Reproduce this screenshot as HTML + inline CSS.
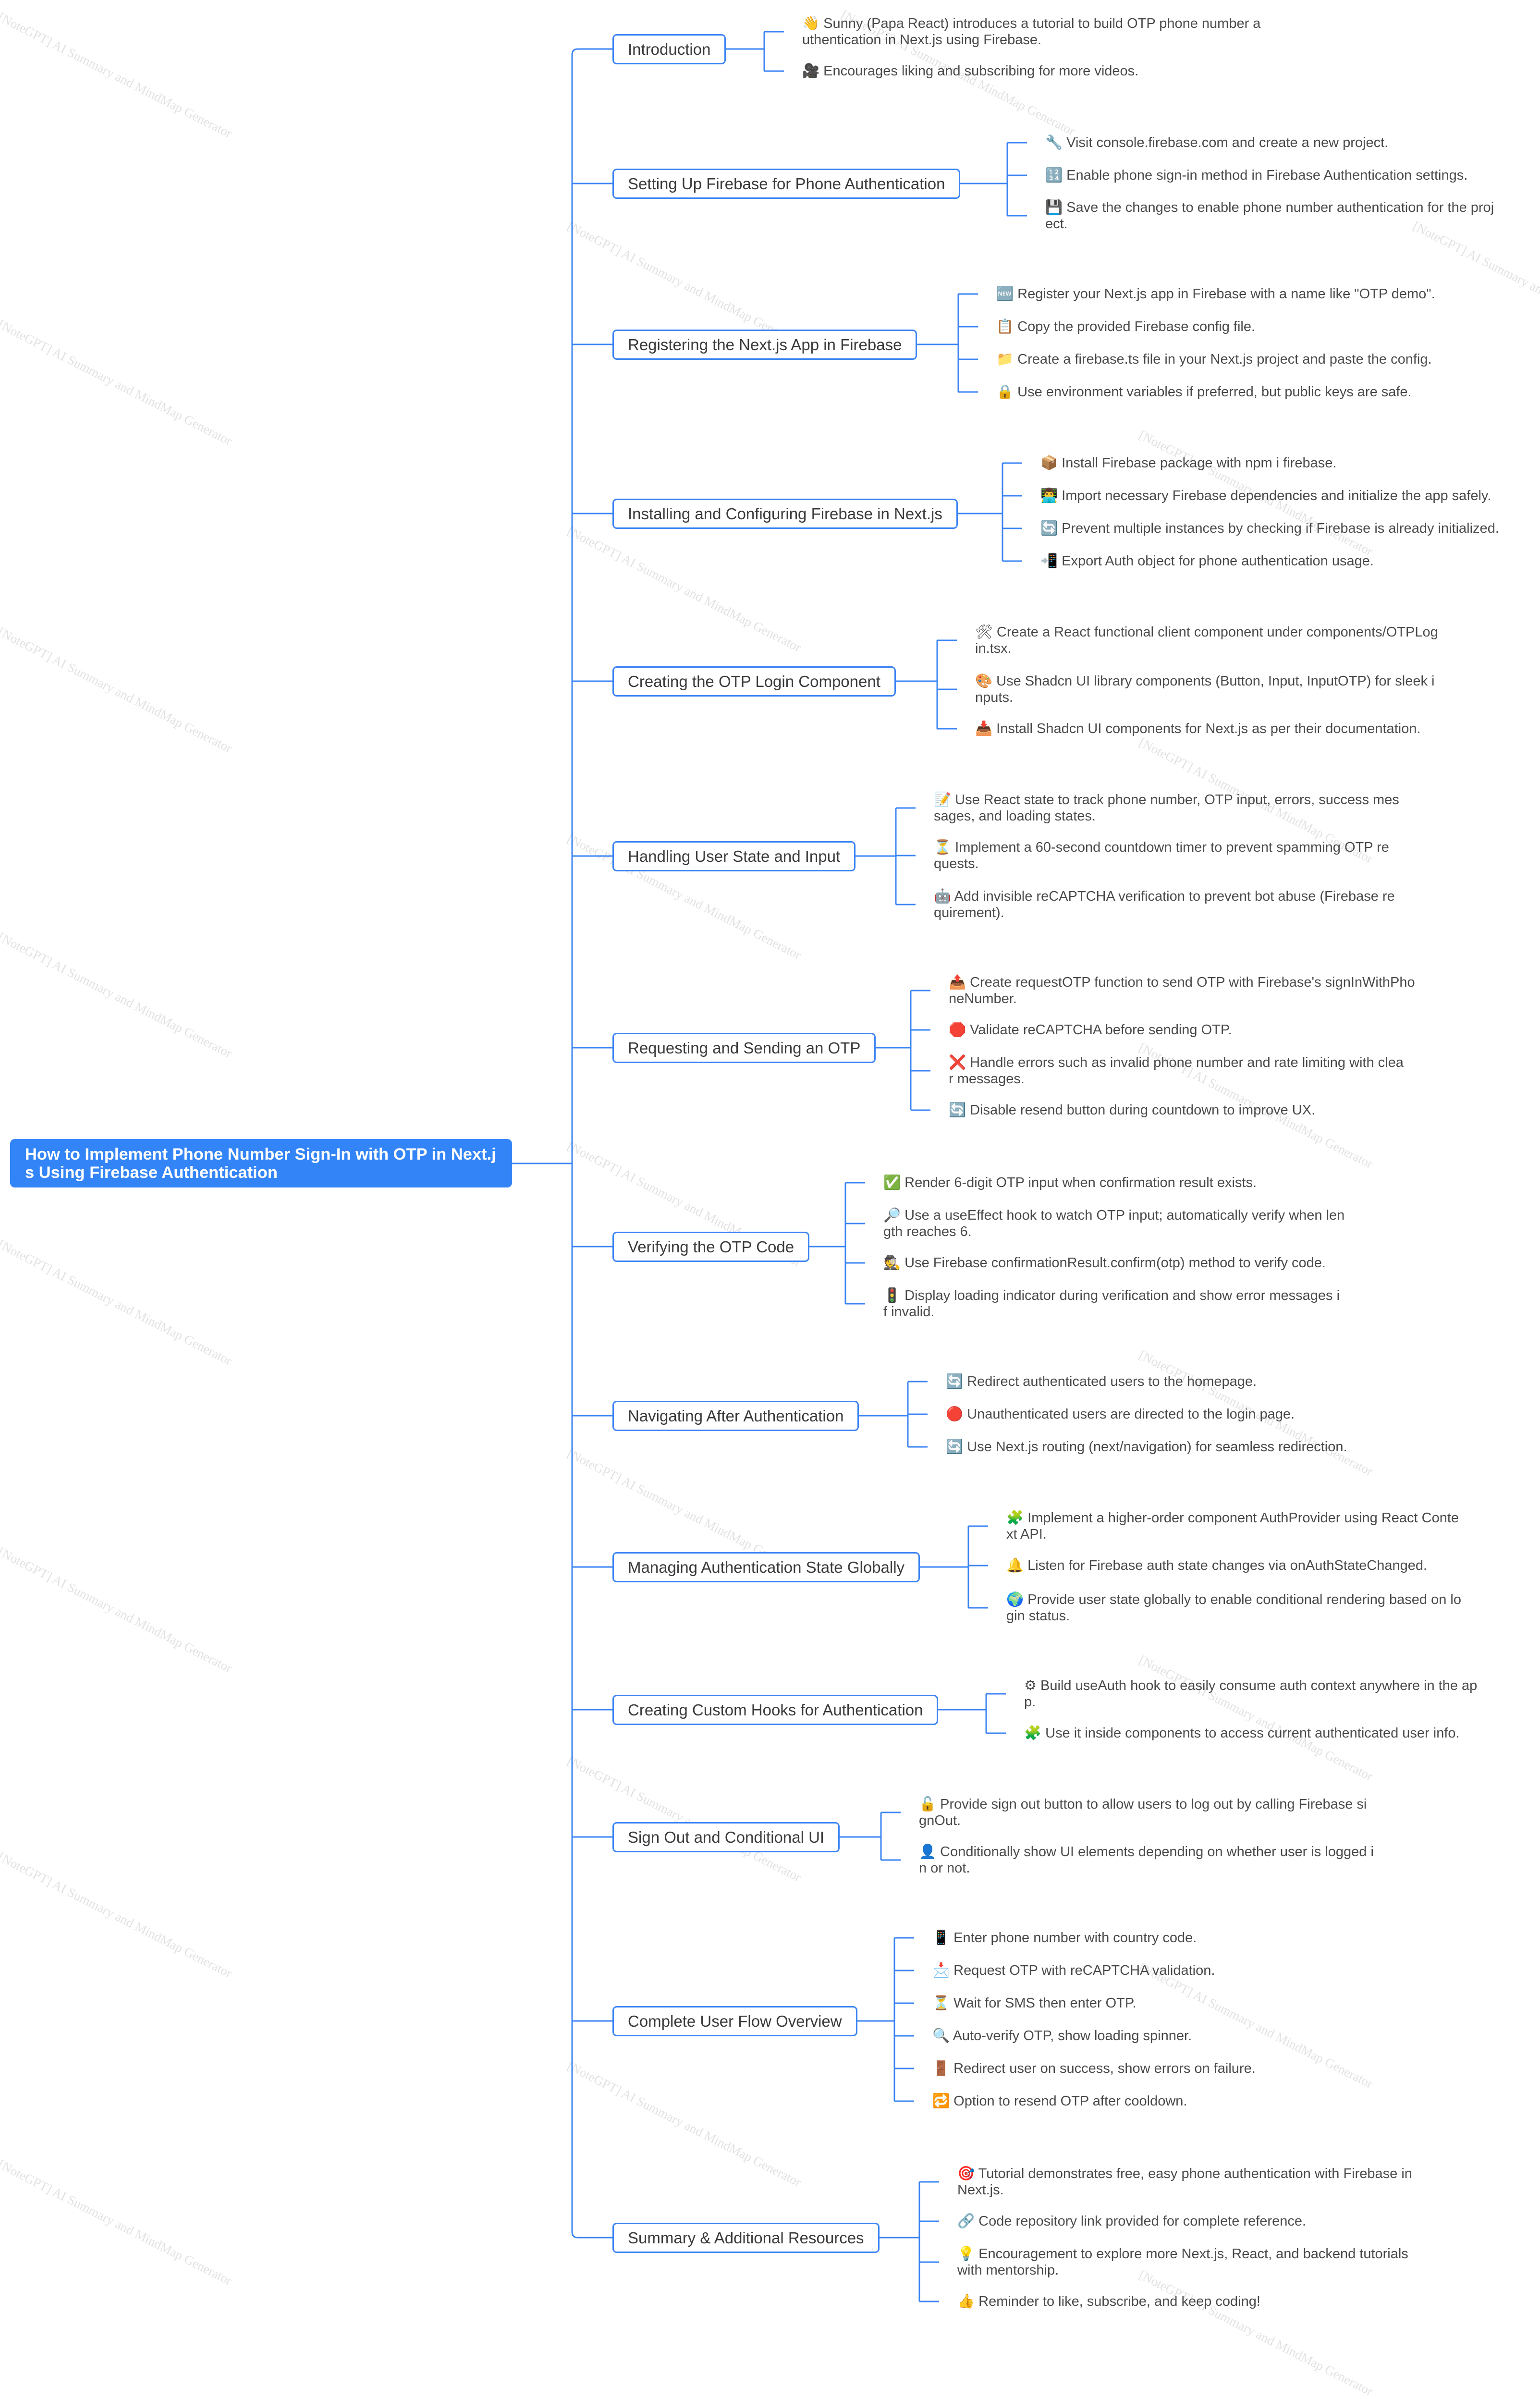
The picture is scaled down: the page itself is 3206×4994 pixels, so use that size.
<!DOCTYPE html>
<html><head><meta charset="utf-8"><style>
html,body{margin:0;padding:0;background:#fff}
body{width:3206px;height:4844px;position:relative;overflow:hidden;font-family:"Liberation Sans","DejaVu Sans",sans-serif}
svg{position:absolute;left:0;top:0}
.b{position:absolute;left:1275px;height:63px;box-sizing:border-box;border:3px solid #3b84f4;border-radius:9px;background:#fff;padding:0 29px;font-size:33px;line-height:57px;color:#3a3a3a;white-space:nowrap}
.l{position:absolute;font-size:29px;line-height:34px;color:#4a4a4a;white-space:pre}
.w{position:absolute;font-family:"Liberation Serif",serif;font-size:27px;color:#e2e2e2;transform:rotate(27deg);transform-origin:0 0;white-space:nowrap}
.root{position:absolute;left:21px;top:2371px;width:1045px;height:101px;box-sizing:border-box;background:#3385f7;border-radius:10px;color:#fff;font-weight:bold;font-size:34.5px;line-height:38px;padding:13px 0 0 31px;white-space:pre}
</style></head><body>
<div class="w" style="left:5px;top:20px">[NoteGPT] AI Summary and MindMap Generator</div>
<div class="w" style="left:1760px;top:15px">[NoteGPT] AI Summary and MindMap Generator</div>
<div class="w" style="left:1190px;top:455px">[NoteGPT] AI Summary and MindMap Generator</div>
<div class="w" style="left:2950px;top:455px">[NoteGPT] AI Summary and MindMap Generator</div>
<div class="w" style="left:5px;top:660px">[NoteGPT] AI Summary and MindMap Generator</div>
<div class="w" style="left:2380px;top:890px">[NoteGPT] AI Summary and MindMap Generator</div>
<div class="w" style="left:1190px;top:1090px">[NoteGPT] AI Summary and MindMap Generator</div>
<div class="w" style="left:5px;top:1300px">[NoteGPT] AI Summary and MindMap Generator</div>
<div class="w" style="left:2380px;top:1530px">[NoteGPT] AI Summary and MindMap Generator</div>
<div class="w" style="left:1190px;top:1730px">[NoteGPT] AI Summary and MindMap Generator</div>
<div class="w" style="left:5px;top:1935px">[NoteGPT] AI Summary and MindMap Generator</div>
<div class="w" style="left:2380px;top:2165px">[NoteGPT] AI Summary and MindMap Generator</div>
<div class="w" style="left:1190px;top:2370px">[NoteGPT] AI Summary and MindMap Generator</div>
<div class="w" style="left:5px;top:2575px">[NoteGPT] AI Summary and MindMap Generator</div>
<div class="w" style="left:2380px;top:2805px">[NoteGPT] AI Summary and MindMap Generator</div>
<div class="w" style="left:1190px;top:3010px">[NoteGPT] AI Summary and MindMap Generator</div>
<div class="w" style="left:5px;top:3215px">[NoteGPT] AI Summary and MindMap Generator</div>
<div class="w" style="left:2380px;top:3440px">[NoteGPT] AI Summary and MindMap Generator</div>
<div class="w" style="left:1190px;top:3650px">[NoteGPT] AI Summary and MindMap Generator</div>
<div class="w" style="left:5px;top:3850px">[NoteGPT] AI Summary and MindMap Generator</div>
<div class="w" style="left:2380px;top:4080px">[NoteGPT] AI Summary and MindMap Generator</div>
<div class="w" style="left:1190px;top:4285px">[NoteGPT] AI Summary and MindMap Generator</div>
<div class="w" style="left:5px;top:4490px">[NoteGPT] AI Summary and MindMap Generator</div>
<div class="w" style="left:2380px;top:4720px">[NoteGPT] AI Summary and MindMap Generator</div>

<svg width="3206" height="4844" fill="none" stroke="#3b84f4" stroke-width="3">
<path d="M1066 2422H1191M1203 102H1275M1191 114V4646M1203 4658H1275"/>
<path d="M1191 114Q1191 102 1203 102M1191 4646Q1191 4658 1203 4658"/>
<path d="M1191 382H1275M1191 717H1275M1191 1069H1275M1191 1418H1275M1191 1782H1275M1191 2181H1275M1191 2595H1275M1191 2947H1275M1191 3262H1275M1191 3559H1275M1191 3824H1275M1191 4207H1275"/>
<path d="M1275 102H1591M1591 66V148M1591 66H1632M1591 148H1632"/>
<path d="M1275 382H2097M2097 297V449M2097 297H2138M2097 365H2138M2097 449H2138"/>
<path d="M1275 717H1995M1995 612V816M1995 612H2036M1995 680H2036M1995 748H2036M1995 816H2036"/>
<path d="M1275 1069H2087M2087 964V1168M2087 964H2128M2087 1032H2128M2087 1100H2128M2087 1168H2128"/>
<path d="M1275 1418H1951M1951 1333V1517M1951 1333H1992M1951 1435H1992M1951 1517H1992"/>
<path d="M1275 1782H1865M1865 1682V1883M1865 1682H1906M1865 1781H1906M1865 1883H1906"/>
<path d="M1275 2181H1896M1896 2062V2311M1896 2062H1937M1896 2144H1937M1896 2229H1937M1896 2311H1937"/>
<path d="M1275 2595H1760M1760 2462V2714M1760 2462H1801M1760 2547H1801M1760 2629H1801M1760 2714H1801"/>
<path d="M1275 2947H1890M1890 2876V3012M1890 2876H1931M1890 2944H1931M1890 3012H1931"/>
<path d="M1275 3262H2016M2016 3177V3347M2016 3177H2057M2016 3259H2057M2016 3347H2057"/>
<path d="M1275 3559H2053M2053 3526V3608M2053 3526H2094M2053 3608H2094"/>
<path d="M1275 3824H1834M1834 3773V3872M1834 3773H1875M1834 3872H1875"/>
<path d="M1275 4207H1862M1862 4034V4374M1862 4034H1903M1862 4102H1903M1862 4170H1903M1862 4238H1903M1862 4306H1903M1862 4374H1903"/>
<path d="M1275 4658H1914M1914 4542V4791M1914 4542H1955M1914 4624H1955M1914 4709H1955M1914 4791H1955"/>
</svg>

<div class="root">How to Implement Phone Number Sign-In with OTP in Next.j
s Using Firebase Authentication</div>

<div class="b" style="top:71px">Introduction</div>
<div class="b" style="top:351px">Setting Up Firebase for Phone Authentication</div>
<div class="b" style="top:686px">Registering the Next.js App in Firebase</div>
<div class="b" style="top:1038px">Installing and Configuring Firebase in Next.js</div>
<div class="b" style="top:1387px">Creating the OTP Login Component</div>
<div class="b" style="top:1751px">Handling User State and Input</div>
<div class="b" style="top:2150px">Requesting and Sending an OTP</div>
<div class="b" style="top:2564px">Verifying the OTP Code</div>
<div class="b" style="top:2916px">Navigating After Authentication</div>
<div class="b" style="top:3231px">Managing Authentication State Globally</div>
<div class="b" style="top:3528px">Creating Custom Hooks for Authentication</div>
<div class="b" style="top:3793px">Sign Out and Conditional UI</div>
<div class="b" style="top:4176px">Complete User Flow Overview</div>
<div class="b" style="top:4627px">Summary &amp; Additional Resources</div>

<div class="l" style="left:1670px;top:32px">👋 Sunny (Papa React) introduces a tutorial to build OTP phone number a
uthentication in Next.js using Firebase.</div>
<div class="l" style="left:1670px;top:131px">🎥 Encourages liking and subscribing for more videos.</div>

<div class="l" style="left:2176px;top:280px">🔧 Visit console.firebase.com and create a new project.</div>
<div class="l" style="left:2176px;top:348px">🔢 Enable phone sign-in method in Firebase Authentication settings.</div>
<div class="l" style="left:2176px;top:415px">💾 Save the changes to enable phone number authentication for the proj
ect.</div>

<div class="l" style="left:2074px;top:595px">🆕 Register your Next.js app in Firebase with a name like "OTP demo".</div>
<div class="l" style="left:2074px;top:663px">📋 Copy the provided Firebase config file.</div>
<div class="l" style="left:2074px;top:731px">📁 Create a firebase.ts file in your Next.js project and paste the config.</div>
<div class="l" style="left:2074px;top:799px">🔒 Use environment variables if preferred, but public keys are safe.</div>

<div class="l" style="left:2166px;top:947px">📦 Install Firebase package with npm i firebase.</div>
<div class="l" style="left:2166px;top:1015px">👨‍💻 Import necessary Firebase dependencies and initialize the app safely.</div>
<div class="l" style="left:2166px;top:1083px">🔄 Prevent multiple instances by checking if Firebase is already initialized.</div>
<div class="l" style="left:2166px;top:1151px">📲 Export Auth object for phone authentication usage.</div>

<div class="l" style="left:2030px;top:1299px">🛠 Create a React functional client component under components/OTPLog
in.tsx.</div>
<div class="l" style="left:2030px;top:1401px">🎨 Use Shadcn UI library components (Button, Input, InputOTP) for sleek i
nputs.</div>
<div class="l" style="left:2030px;top:1500px">📥 Install Shadcn UI components for Next.js as per their documentation.</div>

<div class="l" style="left:1944px;top:1648px">📝 Use React state to track phone number, OTP input, errors, success mes
sages, and loading states.</div>
<div class="l" style="left:1944px;top:1747px">⏳ Implement a 60-second countdown timer to prevent spamming OTP re
quests.</div>
<div class="l" style="left:1944px;top:1849px">🤖 Add invisible reCAPTCHA verification to prevent bot abuse (Firebase re
quirement).</div>

<div class="l" style="left:1975px;top:2028px">📤 Create requestOTP function to send OTP with Firebase's signInWithPho
neNumber.</div>
<div class="l" style="left:1975px;top:2127px">🛑 Validate reCAPTCHA before sending OTP.</div>
<div class="l" style="left:1975px;top:2195px">❌ Handle errors such as invalid phone number and rate limiting with clea
r messages.</div>
<div class="l" style="left:1975px;top:2294px">🔄 Disable resend button during countdown to improve UX.</div>

<div class="l" style="left:1839px;top:2445px">✅ Render 6-digit OTP input when confirmation result exists.</div>
<div class="l" style="left:1839px;top:2513px">🔎 Use a useEffect hook to watch OTP input; automatically verify when len
gth reaches 6.</div>
<div class="l" style="left:1839px;top:2612px">🕵 Use Firebase confirmationResult.confirm(otp) method to verify code.</div>
<div class="l" style="left:1839px;top:2680px">🚦 Display loading indicator during verification and show error messages i
f invalid.</div>

<div class="l" style="left:1969px;top:2859px">🔄 Redirect authenticated users to the homepage.</div>
<div class="l" style="left:1969px;top:2927px">🔴 Unauthenticated users are directed to the login page.</div>
<div class="l" style="left:1969px;top:2995px">🔄 Use Next.js routing (next/navigation) for seamless redirection.</div>

<div class="l" style="left:2095px;top:3143px">🧩 Implement a higher-order component AuthProvider using React Conte
xt API.</div>
<div class="l" style="left:2095px;top:3242px">🔔 Listen for Firebase auth state changes via onAuthStateChanged.</div>
<div class="l" style="left:2095px;top:3313px">🌍 Provide user state globally to enable conditional rendering based on lo
gin status.</div>

<div class="l" style="left:2132px;top:3492px">⚙ Build useAuth hook to easily consume auth context anywhere in the ap
p.</div>
<div class="l" style="left:2132px;top:3591px">🧩 Use it inside components to access current authenticated user info.</div>

<div class="l" style="left:1913px;top:3739px">🔓 Provide sign out button to allow users to log out by calling Firebase si
gnOut.</div>
<div class="l" style="left:1913px;top:3838px">👤 Conditionally show UI elements depending on whether user is logged i
n or not.</div>

<div class="l" style="left:1941px;top:4017px">📱 Enter phone number with country code.</div>
<div class="l" style="left:1941px;top:4085px">📩 Request OTP with reCAPTCHA validation.</div>
<div class="l" style="left:1941px;top:4153px">⏳ Wait for SMS then enter OTP.</div>
<div class="l" style="left:1941px;top:4221px">🔍 Auto-verify OTP, show loading spinner.</div>
<div class="l" style="left:1941px;top:4289px">🚪 Redirect user on success, show errors on failure.</div>
<div class="l" style="left:1941px;top:4357px">🔁 Option to resend OTP after cooldown.</div>

<div class="l" style="left:1993px;top:4508px">🎯 Tutorial demonstrates free, easy phone authentication with Firebase in
Next.js.</div>
<div class="l" style="left:1993px;top:4607px">🔗 Code repository link provided for complete reference.</div>
<div class="l" style="left:1993px;top:4675px">💡 Encouragement to explore more Next.js, React, and backend tutorials
with mentorship.</div>
<div class="l" style="left:1993px;top:4774px">👍 Reminder to like, subscribe, and keep coding!</div>
</body></html>
